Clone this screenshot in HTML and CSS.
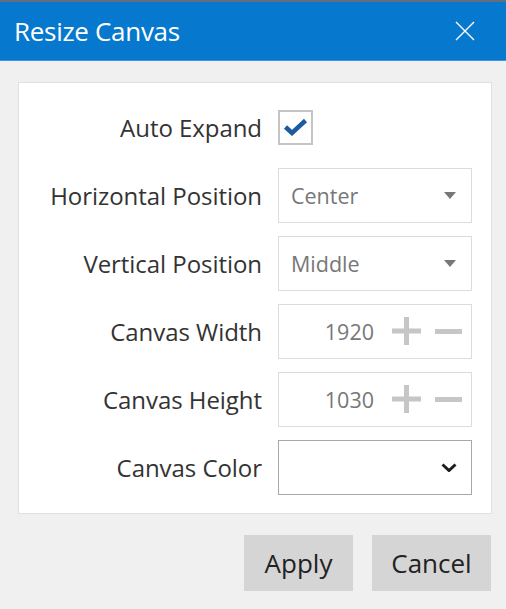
FILE: index.html
```
<!DOCTYPE html>
<html lang="en">

<head>
    <meta charset="UTF-8">
    <meta name="viewport" content="width=device-width, initial-scale=1.0">
    <title>Resize Canvas</title>

    <link rel="stylesheet" href="styles.css">

</head>
<body>

    <div class="dialog">
        <div class="titlebar">
            <span class="title">Resize Canvas</span>
            <svg class="close" width="20" height="20" viewBox="0 0 20 20">
                <path d="M1 1 L19 19 M19 1 L1 19" stroke="#fff" stroke-width="1.4" fill="none"/>
            </svg>
        </div>

        <div class="content">
            <div class="panel">
                <label class="label">Auto Expand</label>
                <div class="control">
                    <span class="checkbox">
                        <svg width="25" height="18" viewBox="0 0 25 18">
                            <path d="M2.5 9 L9 15 L22.5 2.5" stroke="#1c5c9e" stroke-width="4.5" fill="none"/>
                        </svg>
                    </span>
                </div>

                <label class="label">Horizontal Position</label>
                <div class="control">
                    <div class="field select">
                        <span class="value">Center</span>
                        <svg width="12" height="7" viewBox="0 0 12 7"><path d="M0 0 H12 L6 7 Z" fill="#777"/></svg>
                    </div>
                </div>

                <label class="label">Vertical Position</label>
                <div class="control">
                    <div class="field select">
                        <span class="value">Middle</span>
                        <svg width="12" height="7" viewBox="0 0 12 7"><path d="M0 0 H12 L6 7 Z" fill="#777"/></svg>
                    </div>
                </div>

                <label class="label">Canvas Width</label>
                <div class="control">
                    <div class="field number">
                        <span class="value">1920</span>
                        <svg class="plus" width="29" height="28" viewBox="0 0 29 28"><path d="M0 14 H29 M14.5 0 V28" stroke="#c6c6c6" stroke-width="5"/></svg>
                        <svg class="minus" width="27" height="5" viewBox="0 0 27 5"><path d="M0 2.5 H27" stroke="#c6c6c6" stroke-width="5"/></svg>
                    </div>
                </div>

                <label class="label">Canvas Height</label>
                <div class="control">
                    <div class="field number">
                        <span class="value">1030</span>
                        <svg class="plus" width="29" height="28" viewBox="0 0 29 28"><path d="M0 14 H29 M14.5 0 V28" stroke="#c6c6c6" stroke-width="5"/></svg>
                        <svg class="minus" width="27" height="5" viewBox="0 0 27 5"><path d="M0 2.5 H27" stroke="#c6c6c6" stroke-width="5"/></svg>
                    </div>
                </div>

                <label class="label">Canvas Color</label>
                <div class="control">
                    <div class="field color">
                        <svg width="16" height="9" viewBox="0 0 16 9"><path d="M1.5 1.5 L8 7.5 L14.5 1.5" stroke="#1e1e1e" stroke-width="3" fill="none"/></svg>
                    </div>
                </div>
            </div>

            <div class="buttons">
                <button class="btn apply">Apply</button>
                <button class="btn cancel">Cancel</button>
            </div>
        </div>
    </div>

</body>
</html>
```

FILE: styles.css
```
body {
    margin: 0;
    font-family: "Open Sans", "Noto Sans", sans-serif;
    background-color: #f0f0f0;
    color: #333;
}

.dialog {
    width: 506px;
    height: 609px;
    background-color: #f0f0f0;
    border-top: 2px solid #5f6f80;
    box-sizing: border-box;
}

.titlebar {
    height: 58px;
    background-color: #0678cd;
    border-bottom: 1px solid #3f97da;
    display: flex;
    align-items: center;
    justify-content: space-between;
    padding: 0 31px 0 14px;
}

.title {
    color: #fff;
    font-size: 26px;
    letter-spacing: -0.3px;
}

.content {
    padding: 21px 14px 0 18px;
}

.panel {
    width: 474px;
    height: 432px;
    box-sizing: border-box;
    background-color: #fff;
    border: 1px solid #e0e0e0;
    display: grid;
    grid-template-columns: 243px 194px;
    grid-auto-rows: 56px;
    column-gap: 16px;
    row-gap: 12px;
    padding-top: 16px;
}

.label {
    display: flex;
    align-items: center;
    justify-content: flex-end;
    font-size: 24px;
    color: #333;
    letter-spacing: -0.05px;
}

.control {
    display: flex;
    align-items: center;
}

.checkbox {
    width: 35px;
    height: 35px;
    box-sizing: border-box;
    border: 2px solid #c4c4c4;
    display: flex;
    align-items: center;
    justify-content: center;
}

.field {
    width: 194px;
    height: 55px;
    box-sizing: border-box;
    border: 1px solid #dcdcdc;
    display: flex;
    align-items: center;
    font-size: 21.5px;
    color: #777;
}

.select {
    justify-content: space-between;
    padding: 0 15px 0 12px;
}

.number {
    justify-content: flex-end;
    padding-right: 9px;
}

.number .value {
    margin-right: 18px;
}

.number .minus {
    margin-left: 14px;
}

.color {
    border-color: #a8a8a8;
    justify-content: flex-end;
    padding-right: 14px;
}

.buttons {
    display: flex;
    justify-content: flex-end;
    gap: 19px;
    padding-top: 21px;
    padding-right: 1px;
}

.btn {
    height: 56px;
    border: none;
    background-color: #d5d5d5;
    font-family: "Open Sans", "Noto Sans", sans-serif;
    font-size: 26px;
    color: #222;
    padding: 0;
}

.apply {
    width: 109px;
}

.cancel {
    width: 119px;
}
```
